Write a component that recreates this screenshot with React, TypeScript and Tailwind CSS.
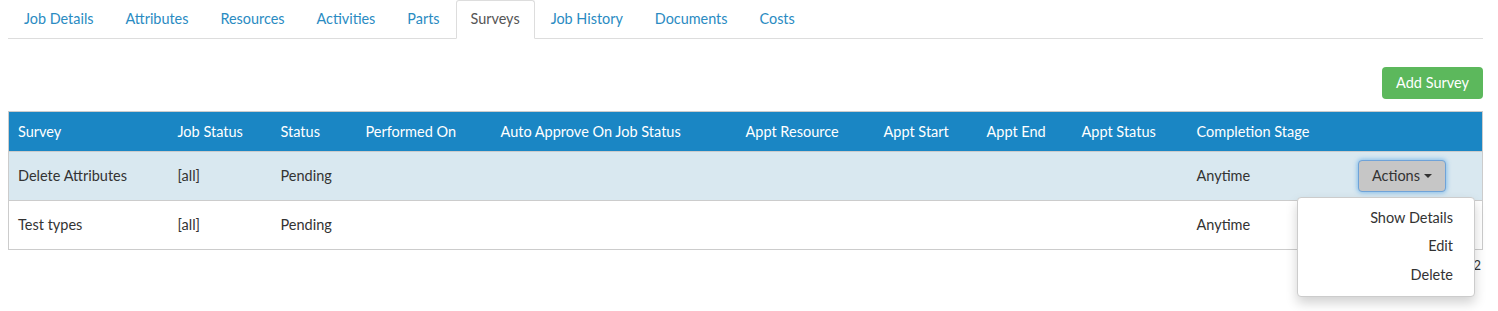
import { useState } from "react";

const tabs = [
  "Job Details",
  "Attributes",
  "Resources",
  "Activities",
  "Parts",
  "Surveys",
  "Job History",
  "Documents",
  "Costs",
];

// column widths in px, matched to the screenshot
const columns: { label: string; width: string }[] = [
  { label: "Survey", width: "w-[160px]" },
  { label: "Job Status", width: "w-[103px]" },
  { label: "Status", width: "w-[85px]" },
  { label: "Performed On", width: "w-[135px]" },
  { label: "Auto Approve On Job Status", width: "w-[245px]" },
  { label: "Appt Resource", width: "w-[138px]" },
  { label: "Appt Start", width: "w-[103px]" },
  { label: "Appt End", width: "w-[95px]" },
  { label: "Appt Status", width: "w-[115px]" },
  { label: "Completion Stage", width: "w-[153px]" },
  { label: "", width: "" },
];

type Survey = {
  name: string;
  jobStatus: string;
  status: string;
  stage: string;
};

const surveys: Survey[] = [
  { name: "Delete Attributes", jobStatus: "[all]", status: "Pending", stage: "Anytime" },
  { name: "Test types", jobStatus: "[all]", status: "Pending", stage: "Anytime" },
];

export default function App() {
  const [openRow] = useState(0);

  return (
    <div className="pl-2 pr-[15px] text-[14.5px] text-[#333] font-['Lato','Noto_Sans',sans-serif] bg-white min-h-[311px]">
      {/* Tabs */}
      <ul className="flex border-b border-[#ddd] text-[14.4px]">
        {tabs.map((tab) =>
          tab === "Surveys" ? (
            <li
              key={tab}
              className="-mb-px px-[14px] py-[8px] leading-5 bg-white border border-[#ddd] border-b-white rounded-t-[3px] text-[#555]"
            >
              {tab}
            </li>
          ) : (
            <li key={tab} className="px-[15px] py-[8px] leading-5 text-[#2a8bc2] border border-transparent">
              {tab}
            </li>
          )
        )}
      </ul>

      {/* Toolbar */}
      <div className="flex justify-end mt-[28px]">
        <button className="h-[32px] px-[14px] rounded-[4px] bg-[#5cb85c] text-white leading-5">
          Add Survey
        </button>
      </div>

      {/* Table */}
      <div className="mt-[12px]">
        <table className="w-full border-collapse border border-[#ccc] table-fixed">
          <thead>
            <tr className="bg-[#1a86c4] text-white">
              {columns.map((col, i) => (
                <th
                  key={i}
                  className={`${col.width} h-[40px] px-[9px] text-left font-normal leading-5`}
                >
                  {col.label}
                </th>
              ))}
            </tr>
          </thead>
          <tbody>
            {surveys.map((s, i) => (
              <tr
                key={s.name}
                className={`${i === openRow ? "bg-[#d9e8f0]" : "bg-white"} border-t border-[#ccc]`}
              >
                <td className="h-[49px] px-[9px] leading-5">{s.name}</td>
                <td className="px-[9px]">{s.jobStatus}</td>
                <td className="px-[9px]">{s.status}</td>
                <td className="px-[9px]"></td>
                <td className="px-[9px]"></td>
                <td className="px-[9px]"></td>
                <td className="px-[9px]"></td>
                <td className="px-[9px]"></td>
                <td className="px-[9px]"></td>
                <td className="px-[9px]">{s.stage}</td>
                <td className="relative pr-[36px] text-right">
                  {i === openRow && (
                    <>
                      <button className="inline-flex items-center gap-[4px] h-[32px] px-[13px] rounded-[4px] bg-[#c6c6c6] border border-[#6fa3d8] shadow-[0_0_4px_1px_rgba(102,175,233,0.7)] text-[#333] leading-5">
                        Actions
                        <span className="inline-block w-0 h-0 border-x-[4px] border-x-transparent border-t-[4px] border-t-[#333]" />
                      </button>
                      <div className="absolute z-10 top-[45px] right-[7px] w-[178px] pt-[6px] pb-[7px] bg-white border border-[#ccc] rounded-[4px] shadow-[0_6px_12px_rgba(0,0,0,0.18)] text-right">
                        <div className="pr-[21px] py-[4px] leading-5">Show Details</div>
                        <div className="pr-[21px] py-[4px] leading-5">Edit</div>
                        <div className="pr-[21px] pt-[5px] pb-[4px] leading-5">Delete</div>
                      </div>
                    </>
                  )}
                </td>
              </tr>
            ))}
          </tbody>
        </table>
        <div className="mt-[5px] pr-[2px] text-right text-[13px] leading-5">1 - 2 of 2</div>
      </div>
    </div>
  );
}
